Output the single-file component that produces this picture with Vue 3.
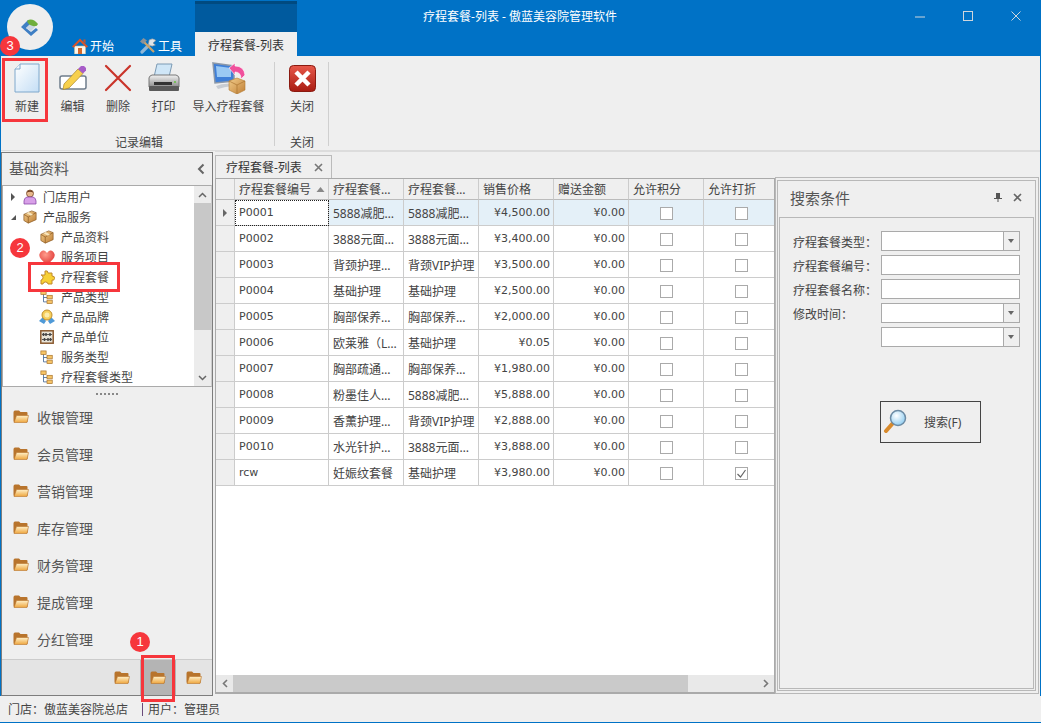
<template>
	<svg class="icon-defs" aria-hidden="true">
		<defs>
			<linearGradient id="paper" x1="0" y1="0" x2="1" y2="1"><stop offset="0" stop-color="#fff" /><stop offset="1" stop-color="#c4def5" /></linearGradient>
			<linearGradient id="folder" x1="0" y1="0" x2="0" y2="1"><stop offset="0" stop-color="#fff0c8" /><stop offset="1" stop-color="#eea63e" /></linearGradient>
			<linearGradient id="closeRed" x1="0" y1="0" x2="0" y2="1"><stop offset="0" stop-color="#e8584a" /><stop offset="1" stop-color="#a81c12" /></linearGradient>
			<linearGradient id="box" x1="0" y1="0" x2="1" y2="1"><stop offset="0" stop-color="#f2cd8c" /><stop offset="1" stop-color="#c07f35" /></linearGradient>
			<linearGradient id="printer" x1="0" y1="0" x2="0" y2="1"><stop offset="0" stop-color="#f2f2f2" /><stop offset="1" stop-color="#8c8c8c" /></linearGradient>
			<radialGradient id="heart" cx="0.4" cy="0.3" r="0.8"><stop offset="0" stop-color="#ff9c8c" /><stop offset="1" stop-color="#dc2c2c" /></radialGradient>
			<radialGradient id="lens" cx="0.4" cy="0.35" r="0.7"><stop offset="0" stop-color="#fff" /><stop offset="1" stop-color="#8ccbf0" /></radialGradient>
			<symbol id="i-box" viewBox="0 0 16 16">
				<path d="M1 5l9-4 5 2v8l-9 4-5-3z" fill="url(#box)" stroke="#8d5a22" stroke-width=".8" />
				<path d="M1 5l5 3 9-5M6 8v7" fill="none" stroke="#8d5a22" stroke-width=".8" />
				<path d="M4 3.6l5 2.9 2.4-1.3-5-2.8z" fill="#f8e6bd" />
			</symbol>
			<symbol id="i-tree" viewBox="0 0 16 16">
				<path d="M4 4v9h4M4 8h4" fill="none" stroke="#4c6f9c" />
				<rect x="1" y="0.5" width="6" height="4" fill="#f6c468" stroke="#a8742c" stroke-width=".8" />
				<rect x="8" y="5.5" width="6" height="4" fill="#f6c468" stroke="#a8742c" stroke-width=".8" />
				<rect x="8" y="11" width="6" height="4" fill="#f6c468" stroke="#a8742c" stroke-width=".8" />
			</symbol>
			<symbol id="i-folder" viewBox="0 0 16 13">
				<path d="M.5 2.5q0-2 1.500-2h4l1.500 1.500h6q1 0 1 1v9H1.500q-1 0-1-1z" fill="#b8742c" />
				<path d="M3.500 5.500h12l-1.500 7H1z" fill="url(#folder)" stroke="#b8742c" stroke-width=".6" />
			</symbol>
		</defs>
	</svg>

	<div class="app">
		<div class="titlebar">
			<div class="logo">
				<svg width="18" height="18" viewBox="0 0 18 18">
					<path d="M0 9l7-7 4 3-6 5 5 4 5-4 2 2-7 6z" fill="#3f7fc4" />
					<path d="M5 10l5-5 4 4-4 4z" fill="#c9d6e4" />
					<path d="M6 3q5-4 11 3-1 3-5 2Q7 7 6 3z" fill="#6fae3c" />
				</svg>
			</div>
			<div class="tab">
				<svg width="16" height="16" viewBox="0 0 16 16">
					<path d="M2.500 8h11v8h-11z" fill="#fbf6ea" stroke="#c9b89c" stroke-width=".6" />
					<path d="M6 10h4v6H6z" fill="#d4682c" />
					<path d="M0 8.500L8 .5l8 8-1.500 1.200L8 3.500 1.500 9.700z" fill="#d8542a" />
					<path d="M11.500 1.500h2v4l-2-2z" fill="#c9542a" />
				</svg>
				<span>开始</span>
			</div>
			<div class="tab">
				<svg width="16" height="16" viewBox="0 0 16 16">
					<path d="M2 14L11 5" stroke="#8eb7d8" stroke-width="3.200" stroke-linecap="round" />
					<path d="M9 2q4-2.500 7 .5l-3 2.500 2.500 2q-3.500 2.500-7-.5z" fill="#dfe4e8" stroke="#7c8690" stroke-width=".6" />
					<path d="M3 3l11 11" stroke="#c9a26a" stroke-width="2.200" />
					<path d="M0 3.500L3.500 0 7 2.500 3 6z" fill="#8a9299" />
				</svg>
				<span>工具</span>
			</div>
			<div class="context">
				<div class="context-head"></div>
				<div class="context-tab">疗程套餐-列表</div>
			</div>
			<div class="title">疗程套餐-列表 - 傲蓝美容院管理软件</div>
			<div class="win-controls">
				<div class="win-btn"><svg width="12" height="12" viewBox="0 0 12 12"><path d="M1 7h10" stroke="#cfd6dc" /></svg></div>
				<div class="win-btn"><svg width="12" height="12" viewBox="0 0 12 12"><rect x="1.500" y="1.500" width="9" height="9" fill="none" stroke="#cfd6dc" /></svg></div>
				<div class="win-btn"><svg width="12" height="12" viewBox="0 0 12 12"><path d="M1.500 1.500l9 9M10.500 1.500l-9 9" stroke="#cfd6dc" /></svg></div>
			</div>
		</div>

		<div class="ribbon">
			<div class="group group-edit">
				<div class="group-btns">
					<div class="rb-btn btn-new">
						<div class="rb-icon">
							<svg width="26" height="30" viewBox="0 0 26 30">
								<path d="M6 1h19v28H1V6z" fill="url(#paper)" stroke="#7fa8cc" />
								<path d="M6 1v5H1" fill="#eef5fb" stroke="#7fa8cc" />
							</svg>
						</div>
						<span>新建</span>
					</div>
					<div class="rb-btn btn-edit">
						<div class="rb-icon">
							<svg width="28" height="28" viewBox="0 0 28 28">
								<rect x="1" y="12" width="26" height="13" rx="2" fill="#fff" stroke="#6f7d8c" stroke-width="1.500" />
								<path d="M5 20L19 5l5 4.500L10 24l-6 1.500z" fill="#f7d04c" stroke="#a8852a" stroke-width=".7" />
								<path d="M19 5l3-3h3l2 2v2.500L24 9.500z" fill="#a75cc8" />
							</svg>
						</div>
						<span>编辑</span>
					</div>
					<div class="rb-btn btn-del">
						<div class="rb-icon">
							<svg width="28" height="28" viewBox="0 0 28 28">
								<path d="M2 2l24 24M26 2L2 26" stroke="#c9342a" stroke-width="2.200" stroke-linecap="round" />
							</svg>
						</div>
						<span>删除</span>
					</div>
					<div class="rb-btn btn-print">
						<div class="rb-icon">
							<svg width="32" height="30" viewBox="0 0 32 30">
								<path d="M9 1h15l-3 13H6z" fill="#cfe6f7" stroke="#7c9ab4" />
								<path d="M1 15q0-2 3-3h24q3 1 3 3v9H1z" fill="url(#printer)" stroke="#777" />
								<rect x="1" y="23" width="30" height="5" rx="1" fill="#5a5a5a" />
								<rect x="6" y="19" width="18" height="3" fill="#333" />
								<circle cx="27" cy="19" r="1" fill="#62c03c" />
							</svg>
						</div>
						<span>打印</span>
					</div>
					<div class="rb-btn btn-import">
						<div class="rb-icon">
							<svg width="34" height="32" viewBox="0 0 34 32">
								<path d="M1 1l21 3v15L3 21z" fill="#3f7fd8" stroke="#8a97a8" stroke-width="1.500" />
								<path d="M4 4l15 2v9L5 15z" fill="#9ac9f4" />
								<path d="M4 24q7-3 16-2v2q-8 1-14 3z" fill="#c8ccd2" />
								<path d="M17 6l6-5v3q9 0 10 9l-4 4q0-7-6-7v3z" fill="#f0509c" stroke="#fff" stroke-width=".6" />
								<path d="M17 19l8-3 8 3v9l-8 4-8-4z" fill="url(#box)" stroke="#b37a30" stroke-width=".6" />
								<path d="M17 19l8 4 8-4M25 23v9" fill="none" stroke="#a36c28" stroke-width=".6" />
							</svg>
						</div>
						<span>导入疗程套餐</span>
					</div>
				</div>
				<div class="group-label">记录编辑</div>
			</div>
			<div class="rb-sep"></div>
			<div class="group group-close">
				<div class="group-btns">
					<div class="rb-btn btn-close">
						<div class="rb-icon">
							<svg width="27" height="27" viewBox="0 0 27 27">
								<rect x=".5" y=".5" width="26" height="26" rx="4" fill="url(#closeRed)" stroke="#8a1a10" />
								<path d="M7 7l13 13M20 7L7 20" stroke="#fff" stroke-width="4.500" />
							</svg>
						</div>
						<span>关闭</span>
					</div>
				</div>
				<div class="group-label">关闭</div>
			</div>
			<div class="rb-sep"></div>
		</div>

		<div class="main">
			<div class="side">
				<div class="side-head">
					<span>基础资料</span>
					<svg width="10" height="12" viewBox="0 0 10 12"><path d="M7.500 1.500L3 6l4.500 4.500" fill="none" stroke="#666" stroke-width="2" /></svg>
				</div>
				<div class="tree">
					<div class="tree-list">
						<div class="node">
							<i class="arrow-open"></i>
							<svg class="node-icon" width="14" height="16" viewBox="0 0 14 16">
								<circle cx="7" cy="4.500" r="3.500" fill="#e8b88c" stroke="#7a4a28" stroke-width=".8" />
								<path d="M3.500 3.500Q7-1 10.500 3.500 7 2 3.500 3.500z" fill="#6a3a1c" />
								<path d="M1 15v-3q0-3 3-4h6q3 1 3 4v3z" fill="#d8a0e8" stroke="#8a4aa8" stroke-width=".8" />
							</svg>
							<span>门店用户</span>
						</div>
						<div class="node">
							<i class="arrow-down"></i>
							<svg class="node-icon" width="14" height="14"><use href="#i-box" /></svg>
							<span>产品服务</span>
						</div>
						<div v-for="item in treeItems" :key="item.label" class="node node-sub">
							<div class="icon-slot">
								<svg v-if="item.icon === 'box'" width="14" height="14"><use href="#i-box" /></svg>
								<svg v-else-if="item.icon === 'heart'" width="16" height="15" viewBox="0 0 16 15">
									<path d="M8 14.500Q-1 8 .5 4 2 0 5 .5 7 1 8 3 9 1 11 .5 14 0 15.500 4 17 8 8 14.500z" fill="url(#heart)" />
								</svg>
								<svg v-else-if="item.icon === 'puzzle'" width="15" height="15" viewBox="0 0 15 15">
									<path d="M5 1q3-1 3 2h4v3q3 0 2.500 2.500T12 10v4H8q0-2-2.500-2T3 14H1v-4q2 0 2-2.500T1 5h4z" fill="#f7d034" stroke="#c0892c" />
								</svg>
								<svg v-else-if="item.icon === 'medal'" width="16" height="16" viewBox="0 0 16 16">
									<path d="M0 12l4-4 3 4-2 3zM16 12l-4-4-3 4 2 3z" fill="#4f9ad8" />
									<circle cx="8" cy="6" r="5" fill="#f6cf5c" stroke="#c08e2c" />
									<circle cx="8" cy="6" r="2.500" fill="#fcecac" />
								</svg>
								<svg v-else-if="item.icon === 'abacus'" width="14" height="14" viewBox="0 0 14 14">
									<rect x=".8" y=".8" width="12.400" height="12.400" fill="#e8e4d8" stroke="#8a5a30" stroke-width="1.500" />
									<path d="M2 4.500h10M2 9.500h10" stroke="#555" />
									<path d="M3.500 3v3M6 3v3M10 3v3M4.500 8v3M8 8v3M10.500 8v3" stroke="#444" stroke-width="1.500" />
								</svg>
								<svg v-else width="14" height="15"><use href="#i-tree" /></svg>
							</div>
							<span>{{ item.label }}</span>
						</div>
					</div>
					<div class="vscroll">
						<div class="sb-btn"><svg width="9" height="6" viewBox="0 0 9 6"><path d="M1 5l3.500-3.500L8 5" fill="none" stroke="#666" stroke-width="1.500" /></svg></div>
						<div class="vthumb"></div>
						<div class="vtrack"></div>
						<div class="sb-btn"><svg width="9" height="6" viewBox="0 0 9 6"><path d="M1 1l3.500 3.500L8 1" fill="none" stroke="#666" stroke-width="1.500" /></svg></div>
					</div>
				</div>
				<div class="splitter"><i class="grip"></i></div>
				<div class="accordion">
					<div v-for="name in menus" :key="name" class="acc-row">
						<svg width="16" height="13"><use href="#i-folder" /></svg>
						<span>{{ name }}</span>
					</div>
				</div>
				<div class="side-foot">
					<div class="foot-btn"><svg width="16" height="13"><use href="#i-folder" /></svg></div>
					<div class="foot-btn foot-active"><svg width="16" height="13"><use href="#i-folder" /></svg></div>
					<div class="foot-btn"><svg width="16" height="13"><use href="#i-folder" /></svg></div>
				</div>
			</div>

			<div class="content">
				<div class="doc-tabs">
					<div class="doc-tab">
						<span>疗程套餐-列表</span>
						<svg width="9" height="9" viewBox="0 0 9 9"><path d="M1 1l7 7M8 1L1 8" stroke="#777" stroke-width="1.600" /></svg>
					</div>
				</div>
				<div class="work">
					<div class="grid">
						<div class="grid-body">
							<table>
								<colgroup>
									<col class="c-sel" />
									<col class="c-code" />
									<col v-for="n in 6" :key="n" class="c-norm" />
								</colgroup>
								<thead>
									<tr>
										<th></th>
										<th>
											<div class="th-sort">
												<span>疗程套餐编号</span>
												<svg width="9" height="5" viewBox="0 0 9 5"><path d="M.5 5L4.500 0l4 5z" fill="#888" /></svg>
											</div>
										</th>
										<th v-for="h in headers" :key="h">{{ h }}</th>
									</tr>
								</thead>
								<tbody>
									<tr v-for="(row, i) in rows" :key="row.code" :class="{ selected: i === 0 }">
										<td class="sel-cell"><i v-if="i === 0" class="row-mark"></i></td>
										<td class="code" :class="{ focused: i === 0 }">{{ row.code }}</td>
										<td>{{ row.name }}</td>
										<td>{{ row.type }}</td>
										<td class="money">{{ row.price }}</td>
										<td class="money">¥0.00</td>
										<td class="check-cell"><span class="check"></span></td>
										<td class="check-cell">
											<span class="check">
												<svg v-if="row.discount" width="11" height="11" viewBox="0 0 11 11"><path d="M1.500 6l3 3 5-7" fill="none" stroke="#666" stroke-width="1.200" /></svg>
											</span>
										</td>
									</tr>
								</tbody>
							</table>
						</div>
						<div class="hscroll">
							<div class="sb-btn"><svg width="6" height="9" viewBox="0 0 6 9"><path d="M5 1L1.500 4.500 5 8" fill="none" stroke="#777" stroke-width="1.600" /></svg></div>
							<div class="hthumb"></div>
							<div class="htrack"></div>
							<div class="sb-btn"><svg width="6" height="9" viewBox="0 0 6 9"><path d="M1 1l3.500 3.500L1 8" fill="none" stroke="#777" stroke-width="1.600" /></svg></div>
						</div>
					</div>

					<div class="search-outer">
						<div class="search-mid">
							<div class="search-head">
								<span>搜索条件</span>
								<svg width="8" height="9" viewBox="0 0 8 9"><path d="M2 0h4v5h2v1H4.500v3h-1V6H0V5h2z" fill="#555" /></svg>
								<svg class="search-x" width="9" height="9" viewBox="0 0 9 9"><path d="M1 1l7 7M8 1L1 8" stroke="#666" stroke-width="1.600" /></svg>
							</div>
							<div class="search-body">
								<div class="form">
									<label>疗程套餐类型：</label>
									<div class="field"><i class="drop"></i></div>
									<label>疗程套餐编号：</label>
									<div class="field"></div>
									<label>疗程套餐名称：</label>
									<div class="field"></div>
									<label>修改时间：</label>
									<div class="field"><i class="drop"></i></div>
									<label></label>
									<div class="field"><i class="drop"></i></div>
								</div>
								<div class="search-btn">
									<svg width="25" height="24" viewBox="0 0 25 24">
										<path d="M3 22l7-8" stroke="#d88a2c" stroke-width="4" stroke-linecap="round" />
										<circle cx="15" cy="9" r="7.500" fill="url(#lens)" stroke="#6c8ba4" stroke-width="1.500" />
									</svg>
									<span>搜索(F)</span>
								</div>
							</div>
						</div>
					</div>
				</div>
			</div>
		</div>

		<div class="status">
			<span>门店：傲蓝美容院总店</span>
			<i class="status-sep"></i>
			<span>用户：管理员</span>
		</div>

		<!-- red help marks drawn over the screen -->
		<div class="mark mark-new"></div>
		<div class="mark mark-tree"></div>
		<div class="mark mark-foot"></div>
		<div class="badge badge-3">3</div>
		<div class="badge badge-2">2</div>
		<div class="badge badge-1">1</div>
	</div>
</template>

<script setup>
const treeItems = [
	{ label: '产品资料', icon: 'box' },
	{ label: '服务项目', icon: 'heart' },
	{ label: '疗程套餐', icon: 'puzzle' },
	{ label: '产品类型', icon: 'tree' },
	{ label: '产品品牌', icon: 'medal' },
	{ label: '产品单位', icon: 'abacus' },
	{ label: '服务类型', icon: 'tree' },
	{ label: '疗程套餐类型', icon: 'tree' },
];

const menus = ['收银管理', '会员管理', '营销管理', '库存管理', '财务管理', '提成管理', '分红管理'];

const headers = ['疗程套餐…', '疗程套餐…', '销售价格', '赠送金额', '允许积分', '允许打折'];

const rows = [
	{ code: 'P0001', name: '5888减肥…', type: '5888减肥…', price: '¥4,500.00' },
	{ code: 'P0002', name: '3888元面…', type: '3888元面…', price: '¥3,400.00' },
	{ code: 'P0003', name: '背颈护理…', type: '背颈VIP护理', price: '¥3,500.00' },
	{ code: 'P0004', name: '基础护理', type: '基础护理', price: '¥2,500.00' },
	{ code: 'P0005', name: '胸部保养…', type: '胸部保养…', price: '¥2,000.00' },
	{ code: 'P0006', name: '欧莱雅（L…', type: '基础护理', price: '¥0.05' },
	{ code: 'P0007', name: '胸部疏通…', type: '胸部保养…', price: '¥1,980.00' },
	{ code: 'P0008', name: '粉墨佳人…', type: '5888减肥…', price: '¥5,888.00' },
	{ code: 'P0009', name: '香薰护理…', type: '背颈VIP护理', price: '¥2,888.00' },
	{ code: 'P0010', name: '水光针护…', type: '3888元面…', price: '¥3,888.00' },
	{ code: 'rcw', name: '妊娠纹套餐', type: '基础护理', price: '¥3,980.00', discount: true },
];
</script>

<style>
html, body {
	margin: 0;
	overflow: hidden;
}
</style>

<style scoped>
.icon-defs {
	display: block;
	width: 0;
	height: 0;
}
.app {
	position: relative;
	display: flex;
	flex-direction: column;
	width: 1041px;
	height: 723px;
	overflow: hidden;
	background: #0072c6;
	color: #444;
	font-family: "Noto Sans", "Noto Sans CJK SC", sans-serif;
	font-size: 12px;
}

/* title bar */
.titlebar {
	display: flex;
	height: 56px;
	flex-shrink: 0;
}
.logo {
	display: flex;
	align-items: center;
	justify-content: center;
	align-self: flex-start;
	width: 46px;
	height: 46px;
	margin: 4px 12px 0 7px;
	border-radius: 50%;
	background: #eee;
}
.tab {
	display: flex;
	align-items: center;
	gap: 2px;
	align-self: flex-end;
	height: 24px;
	padding: 3px 13px 0 7px;
	box-sizing: border-box;
	color: #fff;
}
.tab + .tab {
	margin-left: 6px;
}
.context {
	display: flex;
	flex-direction: column;
	width: 102px;
}
.context-head {
	height: 28px;
	margin-top: 1px;
	border-top: 3px solid #004a80;
	background: #005a9e;
}
.context-tab {
	height: 24px;
	padding-top: 3px;
	box-sizing: border-box;
	background: #efefef;
	color: #333;
	line-height: 22px;
	text-align: center;
}
.title {
	margin-left: 126px;
	color: #fff;
	line-height: 34px;
}
.win-controls {
	display: flex;
	margin-left: auto;
	margin-right: 1px;
}
.win-btn {
	display: flex;
	align-items: center;
	justify-content: center;
	width: 48px;
	height: 32px;
}

/* ribbon */
.ribbon {
	display: flex;
	height: 95px;
	margin: 0 1px;
	flex-shrink: 0;
	box-sizing: border-box;
	border-bottom: 1px solid #dcdcdc;
	background: #efefef;
}
.group {
	display: flex;
	flex-direction: column;
}
.group-edit {
	width: 273px;
	padding-left: 3px;
	box-sizing: border-box;
}
.group-close {
	width: 52px;
}
.group-btns {
	display: flex;
	padding-top: 2px;
}
.rb-btn {
	display: flex;
	flex-direction: column;
	align-items: center;
	height: 64px;
}
.rb-icon {
	display: flex;
	align-items: center;
	justify-content: center;
	height: 32px;
	margin: 4px 0 3px;
}
.rb-btn span {
	line-height: 20px;
	white-space: nowrap;
}
.btn-new, .btn-del {
	width: 46px;
}
.btn-edit, .btn-print {
	width: 45px;
}
.btn-import {
	width: 85px;
}
.btn-close {
	width: 100%;
}
.group-label {
	margin-top: auto;
	margin-bottom: -1px;
	line-height: 16px;
	text-align: center;
}
.rb-sep {
	width: 1px;
	margin: 6px 1px 4px 0;
	background: #cfcfcf;
}

/* main area */
.main {
	display: flex;
	flex: 1;
	min-height: 0;
	margin: 0 1px;
	background: #efefef;
}
.side {
	display: flex;
	flex-direction: column;
	width: 212px;
	height: 544px;
	margin-top: 1px;
	box-sizing: border-box;
	border: 1px solid #7d7d7d;
}
.side-head {
	display: flex;
	align-items: center;
	justify-content: space-between;
	height: 32px;
	flex-shrink: 0;
	padding: 0 6px 3px 7px;
	box-sizing: border-box;
	color: #555;
	font-size: 15px;
}
.side-head svg {
	margin-top: 3px;
}
.tree {
	display: flex;
	height: 202px;
	flex-shrink: 0;
	box-sizing: border-box;
	border: 1px solid #aaa;
	border-right-color: #ccc;
	background: #fff;
}
.tree-list {
	flex: 1;
	min-width: 0;
	padding-top: 1px;
}
.node {
	display: flex;
	align-items: center;
	height: 20px;
	padding-left: 8px;
	color: #444;
	white-space: nowrap;
}
.node > span {
	margin-left: 6px;
}
.node-sub {
	padding-left: 36px;
}
.node > .node-icon {
	margin-left: 7px;
}
.icon-slot {
	display: flex;
	justify-content: center;
	width: 16px;
	flex-shrink: 0;
}
.arrow-open {
	width: 0;
	height: 0;
	margin-right: 1px;
	border-left: 4px solid #555;
	border-top: 4px solid transparent;
	border-bottom: 4px solid transparent;
}
.arrow-down {
	width: 0;
	height: 0;
	border-right: 5px solid #555;
	border-top: 5px solid transparent;
}
.vscroll {
	display: flex;
	flex-direction: column;
	width: 17px;
	background: #ececec;
}
.sb-btn {
	display: flex;
	align-items: center;
	justify-content: center;
	width: 17px;
	height: 17px;
	flex-shrink: 0;
}
.vthumb {
	height: 127px;
	background: #c8c8c8;
}
.vtrack {
	flex: 1;
}
.splitter {
	display: flex;
	align-items: center;
	justify-content: center;
	height: 13px;
	flex-shrink: 0;
}
.grip {
	width: 22px;
	border-top: 2px dotted #888;
}
.accordion {
	flex-shrink: 0;
}
.acc-row {
	display: flex;
	align-items: center;
	gap: 8px;
	height: 37px;
	padding: 0 0 4px 11px;
	box-sizing: border-box;
	color: #555;
	font-size: 14px;
}
.side-foot {
	display: flex;
	justify-content: flex-end;
	flex: 1;
	border-top: 1px solid #ccc;
	background: #e4e4e4;
}
.foot-btn {
	display: flex;
	align-items: center;
	justify-content: center;
	width: 36px;
}
.foot-active {
	background: #b4b4b4;
}

/* document area */
.content {
	display: flex;
	flex: 1;
	flex-direction: column;
	min-width: 0;
	margin-left: 2px;
}
.doc-tabs {
	display: flex;
	align-items: flex-end;
	height: 27px;
	flex-shrink: 0;
	border-top: 1px solid #dcdcdc;
	box-sizing: border-box;
}
.doc-tab {
	display: flex;
	align-items: center;
	justify-content: space-between;
	width: 117px;
	height: 23px;
	padding: 0 8px 0 10px;
	box-sizing: border-box;
	border: 1px solid #bbb;
	border-bottom: none;
	color: #333;
}
.work {
	display: flex;
	height: 516px;
}
.grid {
	display: flex;
	flex-direction: column;
	width: 560px;
	flex-shrink: 0;
	box-sizing: border-box;
	border: 1px solid #aaa;
	border-bottom-width: 2px;
	background: #fff;
}
.grid-body {
	flex: 1;
	min-height: 0;
	overflow: hidden;
}
table {
	width: 563px;
	table-layout: fixed;
	border-collapse: separate;
	border-spacing: 0;
}
.c-sel {
	width: 19px;
}
.c-code {
	width: 94px;
}
.c-norm {
	width: 75px;
}
th {
	height: 21px;
	padding: 0 0 0 4px;
	box-sizing: border-box;
	border-right: 1px solid #ccc;
	border-bottom: 1px solid #bbb;
	background: #efefef;
	color: #444;
	font-weight: normal;
	text-align: left;
	white-space: nowrap;
	overflow: hidden;
}
.th-sort {
	display: flex;
	align-items: center;
	justify-content: space-between;
	padding-right: 3px;
}
td {
	height: 26px;
	padding: 0 0 0 4px;
	box-sizing: border-box;
	border-right: 1px solid #ccc;
	border-bottom: 1px solid #ccc;
	color: #444;
	white-space: nowrap;
	overflow: hidden;
}
.selected td {
	background: #e4f0f8;
}
.selected .focused {
	background: #fff;
	outline: 1px dotted #222;
	outline-offset: -1px;
}
.selected .sel-cell, .sel-cell {
	padding: 0;
	background: #efefef;
	text-align: center;
}
.row-mark {
	display: inline-block;
	width: 0;
	height: 0;
	border-left: 4px solid #666;
	border-top: 4px solid transparent;
	border-bottom: 4px solid transparent;
}
.code {
	font-family: "DejaVu Sans", sans-serif;
	font-size: 11px;
}
.money {
	padding: 0 3px 0 0;
	font-family: "DejaVu Sans", sans-serif;
	font-size: 11px;
	text-align: right;
}
.check-cell {
	padding: 0;
	text-align: center;
}
.check {
	display: inline-flex;
	align-items: center;
	justify-content: center;
	width: 13px;
	height: 13px;
	box-sizing: border-box;
	border: 1px solid #aaa;
	background: #fff;
	vertical-align: middle;
}
.hscroll {
	display: flex;
	height: 17px;
	flex-shrink: 0;
	background: #e9e9e9;
}
.hthumb {
	width: 455px;
	background: #cacaca;
}
.htrack {
	flex: 1;
}

/* search panel */
.search-outer {
	display: flex;
	width: 264px;
	height: 517px;
	margin-top: -1px;
	padding: 2px 2px 2px 1px;
	flex-shrink: 0;
	box-sizing: border-box;
	border: 1px solid #b8b8b8;
}
.search-mid {
	display: flex;
	flex: 1;
	flex-direction: column;
	padding: 0 1px 1px;
	border: 1px solid #b8b8b8;
}
.search-head {
	display: flex;
	align-items: center;
	height: 36px;
	flex-shrink: 0;
	padding: 0 0 4px 11px;
	box-sizing: border-box;
	color: #555;
	font-size: 15px;
}
.search-head span {
	margin-right: auto;
}
.search-x {
	margin: 0 12px 0 11px;
}
.search-body {
	flex: 1;
	padding: 13px 0 0 13px;
	border: 1px solid #b8b8b8;
}
.form {
	display: grid;
	grid-template-columns: 88px 139px;
	grid-auto-rows: 20px;
	row-gap: 4px;
	align-items: center;
}
.form label {
	padding-top: 1px;
	color: #444;
	white-space: nowrap;
}
.field {
	position: relative;
	height: 20px;
	box-sizing: border-box;
	border: 1px solid #aaa;
	background: #fff;
}
.drop {
	position: absolute;
	top: 0;
	right: 0;
	width: 15px;
	height: 18px;
	border-left: 1px solid #aaa;
	background: #efefef;
}
.drop::after {
	content: "";
	position: absolute;
	top: 7px;
	left: 4px;
	border-top: 4px solid #666;
	border-left: 3.500px solid transparent;
	border-right: 3.500px solid transparent;
}
.search-btn {
	display: flex;
	align-items: center;
	gap: 16px;
	width: 101px;
	height: 42px;
	margin: 54px 0 0 87px;
	padding-left: 2px;
	box-sizing: border-box;
	border: 1px solid #444;
	color: #444;
}
.search-btn svg {
	margin-top: -2px;
}

/* status bar */
.status {
	display: flex;
	align-items: center;
	height: 26px;
	flex-shrink: 0;
	margin-bottom: 1px;
	padding: 0 0 0 8px;
	background: #efefef;
	color: #444;
}
.status-sep {
	width: 1px;
	height: 13px;
	margin: 0 5px 0 14px;
	background: #6a4a7a;
}

/* help marks */
.mark {
	position: absolute;
	box-sizing: border-box;
	border: 3px solid #f6363c;
}
.mark-new {
	left: 2px;
	top: 58px;
	width: 46px;
	height: 64px;
}
.mark-tree {
	left: 28px;
	top: 262px;
	width: 92px;
	height: 30px;
}
.mark-foot {
	left: 141px;
	top: 655px;
	width: 34px;
	height: 47px;
}
.badge {
	position: absolute;
	width: 20px;
	height: 20px;
	border-radius: 50%;
	background: #f6363c;
	color: #fff;
	font-family: "Liberation Sans", sans-serif;
	font-size: 13px;
	line-height: 20px;
	text-align: center;
}
.badge-3 {
	left: 0;
	top: 36px;
}
.badge-2 {
	left: 10px;
	top: 238px;
}
.badge-1 {
	left: 130px;
	top: 632px;
}
</style>
